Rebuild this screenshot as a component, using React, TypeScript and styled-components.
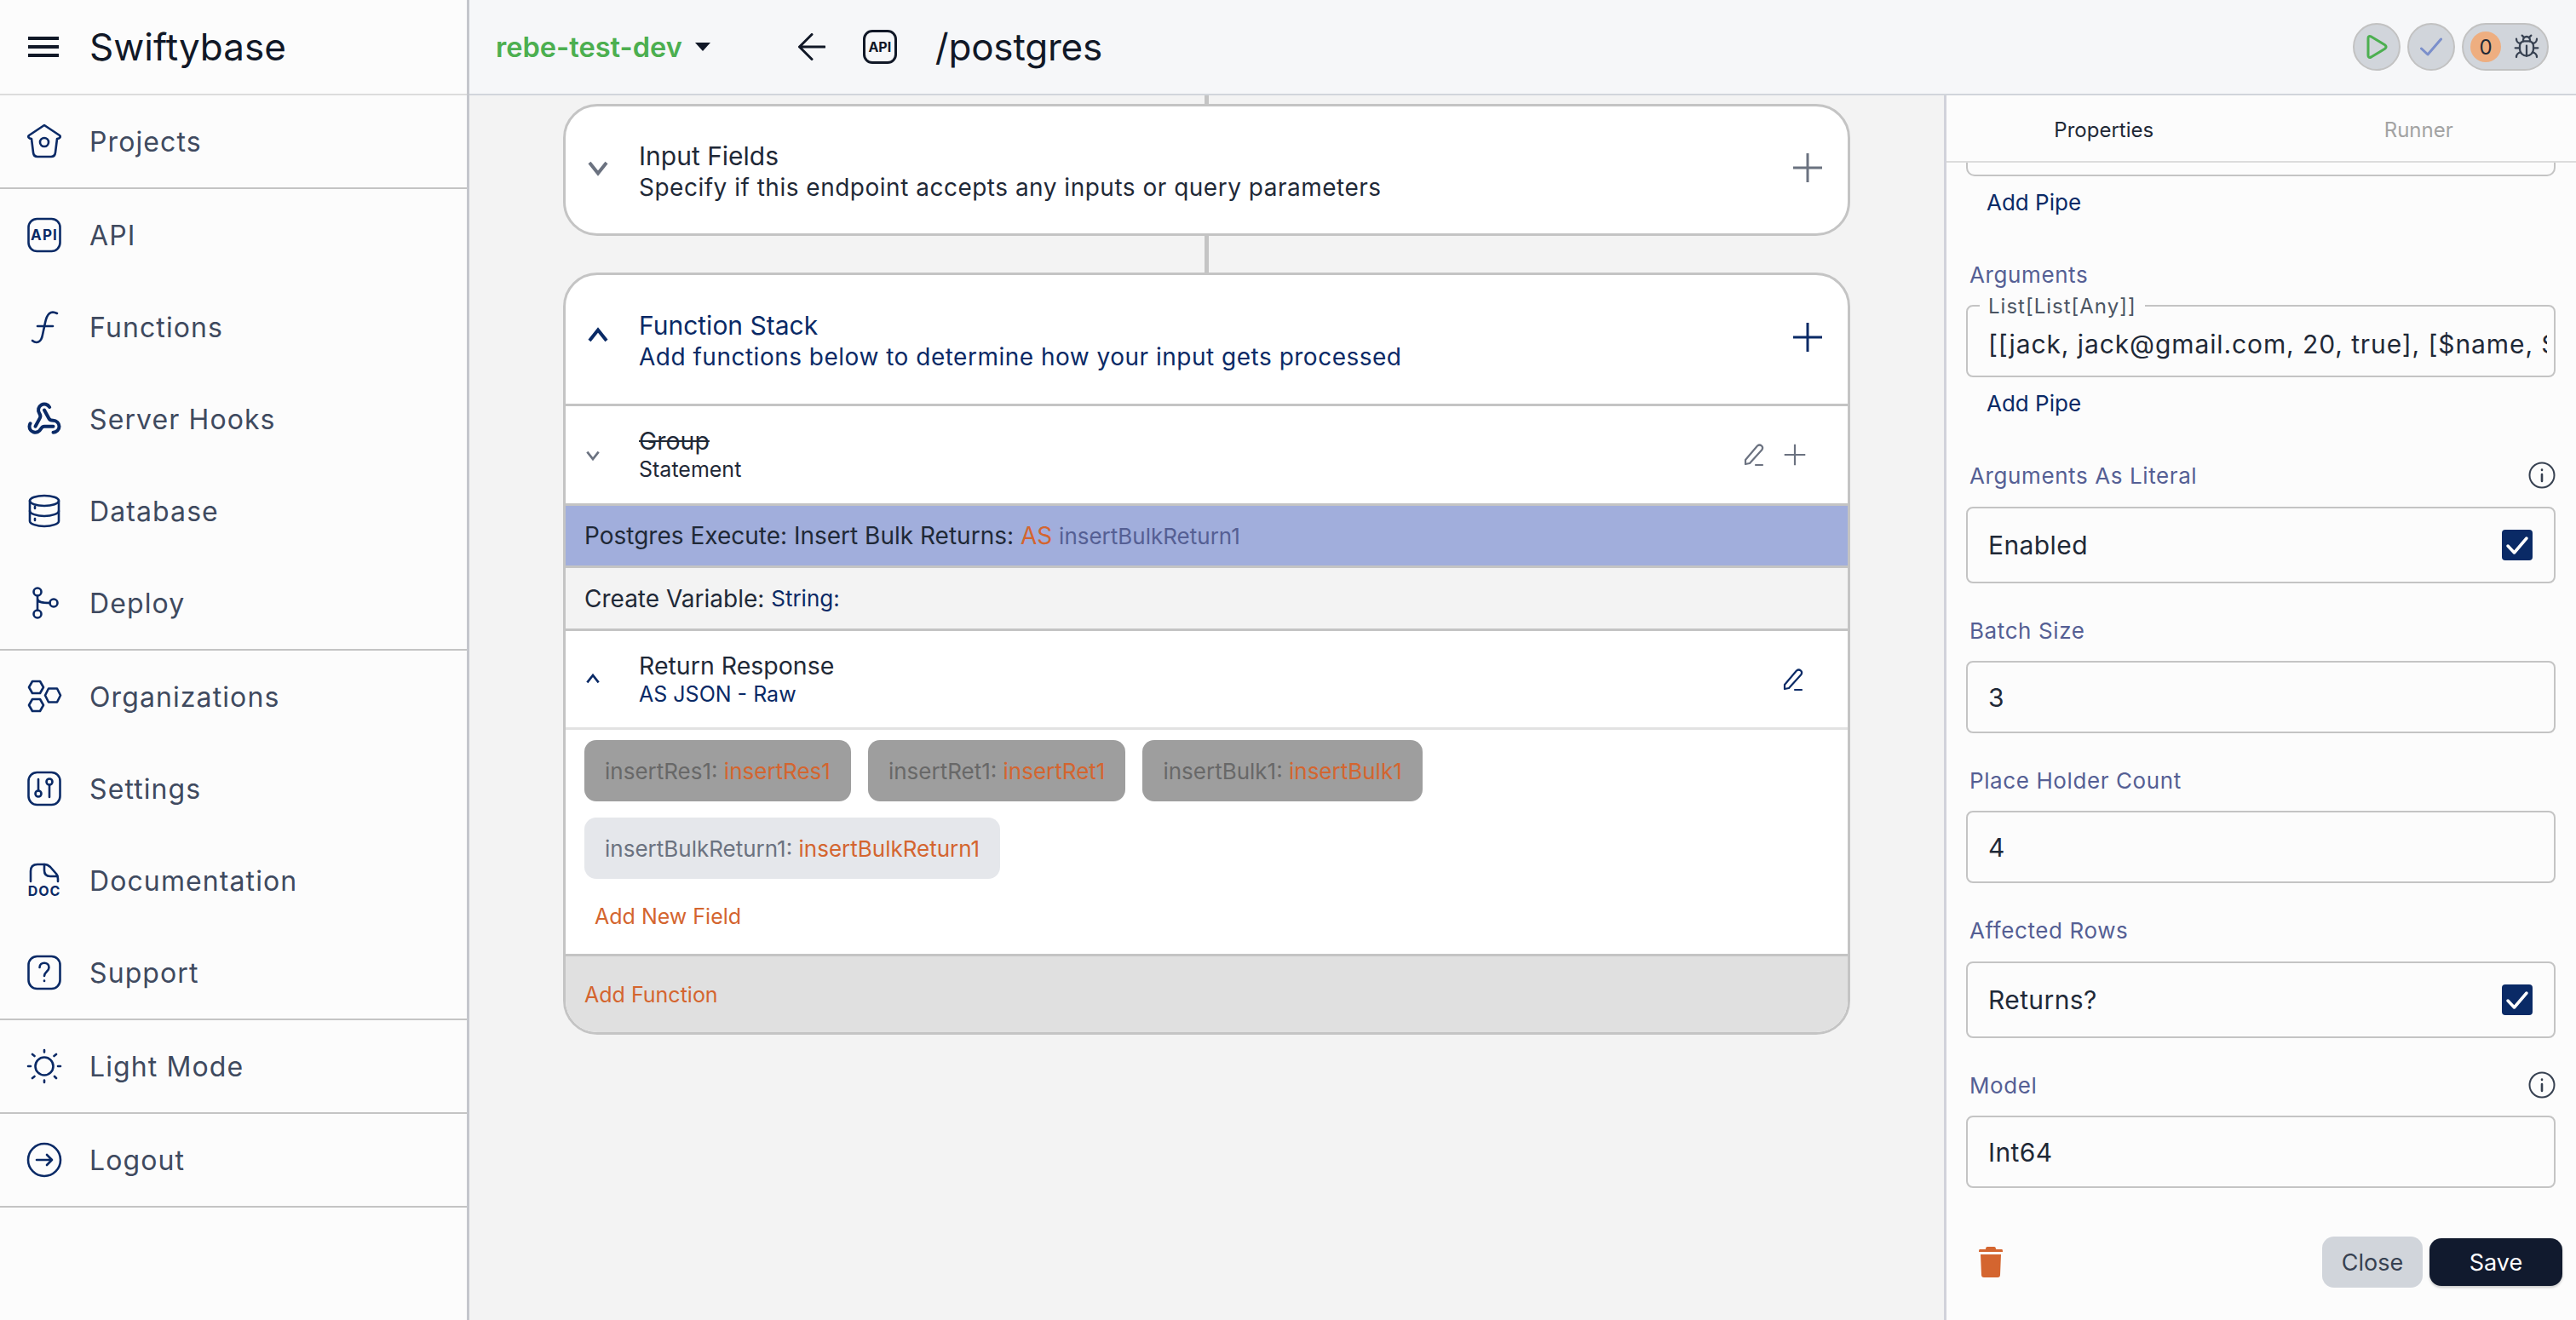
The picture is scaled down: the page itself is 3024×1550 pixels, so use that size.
import React from 'react';
import styled, { createGlobalStyle } from 'styled-components';
import { Bug, Webhook } from 'lucide-react';

const NAVY = '#0a2a66';
const ORANGE = '#d4652f';
const LINE = '#c4c4c4';

const GlobalStyle = createGlobalStyle`
  html, body {
    margin: 0;
    width: 3024px;
    height: 1550px;
    overflow: hidden;
    background: #f3f3f3;
    font-family: Inter, "Noto Sans", sans-serif;
    color: #111827;
  }
  * { box-sizing: border-box; }
`;

const Page = styled.div`
  display: flex;
  width: 3024px;
  height: 1550px;
`;

/* Sidebar */
const Sidebar = styled.aside`
  width: 551px;
  flex: none;
  height: 100%;
  background: #fcfcfc;
  border-right: 3px solid #c4c6cc;
`;

const Brand = styled.div`
  display: flex;
  align-items: center;
  height: 112px;
  padding-left: 33px;
  border-bottom: 2px solid #dcdcdc;
`;

const Burger = styled.div`
  display: flex;
  flex-direction: column;
  gap: 6px;
  width: 36px;
  margin-right: 36px;
  span {
    height: 4px;
    background: #111827;
  }
`;

const BrandName = styled.div`
  font-size: 44px;
  color: #111827;
`;

const NavGroup = styled.div`
  border-bottom: 2px solid ${LINE};
`;

const NavRow = styled.div`
  display: flex;
  align-items: center;
  height: 108px;
  padding-left: 31px;
  gap: 32px;
  font-size: 32px;
  letter-spacing: 1.1px;
  color: #3f4a5f;
`;

const NavIcon = styled.svg.attrs({ viewBox: '0 0 42 42', fill: 'none' })`
  width: 42px;
  height: 42px;
  flex: none;
  overflow: visible;
  stroke: ${NAVY};
  stroke-width: 2.6;
  stroke-linecap: round;
  stroke-linejoin: round;
  text {
    fill: ${NAVY};
    stroke: none;
    font-family: Inter, sans-serif;
    font-weight: 700;
  }
`;

const HomeIcon = () => (
  <NavIcon>
    <path d="M21 2 L39 14 Q41 16 38 17.500 L36 18 L34 34 Q33.500 39 29 39 H13 Q8.500 39 8 34 L6 18 L4 17.500 Q1 16 3 14 Z" />
    <circle cx="21" cy="22" r="5" />
  </NavIcon>
);

const ApiGlyph = () => (
  <NavIcon>
    <rect x="2.500" y="2" width="37" height="38" rx="10" />
    <text x="21" y="27" fontSize="17" textAnchor="middle">API</text>
  </NavIcon>
);

const FunctionIcon = () => (
  <NavIcon>
    <path d="M36 5 C28 1 24 6 22 16 L19 30 C17.500 39 12 41 7 37" />
    <path d="M13 20 H31" />
  </NavIcon>
);

const DatabaseIcon = () => (
  <NavIcon>
    <ellipse cx="21" cy="9" rx="17" ry="6" />
    <path d="M4 9 V33 C4 36 12 39 21 39 C30 39 38 36 38 33 V9" />
    <path d="M4 21 C4 24 12 27 21 27 C30 27 38 24 38 21" />
    <path d="M10 16 V18 M10 30 V32" />
  </NavIcon>
);

const DeployIcon = () => (
  <NavIcon>
    <circle cx="13" cy="8" r="4.500" />
    <circle cx="13" cy="34" r="4.500" />
    <circle cx="32" cy="21" r="4.500" />
    <path d="M13 12.500 V29.500 M13 16 C13 20 18 21 27.500 21" />
  </NavIcon>
);

const OrgIcon = () => (
  <NavIcon>
    <path d="M7 3 H16 L20 10 L16 17 H7 L3 10 Z" />
    <path d="M7 24 H16 L20 31 L16 38 H7 L3 31 Z" />
    <path d="M26 11.500 H36 L40 19.500 L36 27.500 H26 L22 19.500 Z" />
  </NavIcon>
);

const SettingsIcon = () => (
  <NavIcon>
    <rect x="2.500" y="2" width="37" height="38" rx="10" />
    <path d="M14 10 V23 M27 17 V31" />
    <circle cx="14" cy="27" r="3.500" />
    <circle cx="27" cy="13" r="3.500" />
  </NavIcon>
);

const DocIcon = () => (
  <NavIcon>
    <path d="M5 22 V10 Q5 2 13 2 H21 C24 2 26 3 28 5 L35 13 Q37 15 37 19 V22" />
    <path d="M21 2 V9 Q21 16 28 16 H36" />
    <text x="21" y="39" fontSize="16" textAnchor="middle" letterSpacing="1">DOC</text>
  </NavIcon>
);

const HelpIcon = () => (
  <NavIcon>
    <rect x="2.500" y="2" width="37" height="38" rx="10" />
    <path d="M15.500 15 C15.500 8 26.500 8 26.500 15 C26.500 20 21 20 21 25" />
    <path d="M21 30.500 V31" />
  </NavIcon>
);

const SunIcon = () => (
  <NavIcon>
    <circle cx="21" cy="21" r="10.500" />
    <path d="M21 2 V4.500 M21 37.500 V40 M2 21 H5 M37 21 H40 M7 7 L9.500 9 M33 33 L35 35 M35 7 L32.500 9 M7 35 L9.500 33" />
  </NavIcon>
);

const LogoutIcon = () => (
  <NavIcon>
    <circle cx="21" cy="21" r="19" />
    <path d="M12 21 H30 M24 15 L30 21 L24 27" />
  </NavIcon>
);

const navGroups: { label: string; icon: React.ReactNode }[][] = [
  [{ label: 'Projects', icon: <HomeIcon /> }],
  [
    { label: 'API', icon: <ApiGlyph /> },
    { label: 'Functions', icon: <FunctionIcon /> },
    { label: 'Server Hooks', icon: <Webhook size={42} color={NAVY} strokeWidth={2.3} /> },
    { label: 'Database', icon: <DatabaseIcon /> },
    { label: 'Deploy', icon: <DeployIcon /> },
  ],
  [
    { label: 'Organizations', icon: <OrgIcon /> },
    { label: 'Settings', icon: <SettingsIcon /> },
    { label: 'Documentation', icon: <DocIcon /> },
    { label: 'Support', icon: <HelpIcon /> },
  ],
  [{ label: 'Light Mode', icon: <SunIcon /> }],
  [{ label: 'Logout', icon: <LogoutIcon /> }],
];

/* Top bar */
const Content = styled.div`
  flex: 1;
  min-width: 0;
  display: flex;
  flex-direction: column;
`;

const TopBar = styled.header`
  display: flex;
  align-items: center;
  height: 112px;
  flex: none;
  padding: 0 32px 0 31px;
  background: #f6f7f9;
  border-bottom: 2px solid #d1d5db;
`;

const ProjectName = styled.div`
  font-size: 32.600px;
  font-weight: 600;
  color: #4caf50;
`;

const Caret = styled.div`
  width: 0;
  height: 0;
  margin-left: 15px;
  border-left: 9px solid transparent;
  border-right: 9px solid transparent;
  border-top: 10px solid #111827;
`;

const BackIcon = styled.svg.attrs({ viewBox: '0 0 32 32', fill: 'none' })`
  width: 32px;
  height: 32px;
  margin-left: 103px;
  stroke: #111827;
  stroke-width: 3;
  stroke-linecap: round;
  stroke-linejoin: round;
`;

const ApiBadge = styled.div`
  display: flex;
  align-items: center;
  justify-content: center;
  width: 40px;
  height: 40px;
  margin-left: 44px;
  border: 3px solid #111827;
  border-radius: 11px;
  font-size: 16px;
  font-weight: 700;
  color: #111827;
`;

const PathTitle = styled.div`
  margin-left: 45px;
  font-size: 44px;
  letter-spacing: -0.2px;
  color: #111827;
`;

const TopActions = styled.div`
  display: flex;
  gap: 8px;
  margin-left: auto;
`;

const ActionPill = styled.div`
  display: flex;
  align-items: center;
  justify-content: center;
  gap: 14px;
  height: 56px;
  min-width: 56px;
  padding: ${({ $wide }: { $wide?: boolean }) => ($wide ? '0 8px' : '0')};
  border: 2px solid #c2c2c2;
  border-radius: 28px;
  background: #d1d5db;
`;

const CountDot = styled.div`
  display: flex;
  align-items: center;
  justify-content: center;
  width: 36px;
  height: 36px;
  border-radius: 50%;
  background: #eeae80;
  font-size: 24px;
  color: #1f2937;
`;

/* Center canvas */
const Body = styled.div`
  flex: 1;
  min-height: 0;
  display: flex;
`;

const Canvas = styled.main`
  flex: 1;
  display: flex;
  flex-direction: column;
  align-items: center;
  background: #f3f3f3;
`;

const Connector = styled.div<{ $h: number }>`
  width: 5px;
  height: ${({ $h }) => $h}px;
  flex: none;
  background: ${LINE};
`;

const Card = styled.section`
  width: 1511px;
  background: #fff;
  border: 3px solid ${LINE};
  border-radius: 40px;
  overflow: hidden;
`;

const CardHead = styled.div<{ $h: number }>`
  display: flex;
  align-items: center;
  height: ${({ $h }) => $h}px;
  padding: 0 29px 0 27px;
`;

const Chevron = styled.svg.attrs({ viewBox: '0 0 24 24', fill: 'none' })<{ $size: number; $color: string; $up?: boolean }>`
  width: ${({ $size }) => $size}px;
  height: ${({ $size }) => $size}px;
  flex: none;
  stroke: ${({ $color }) => $color};
  stroke-width: 3.200;
  transform: ${({ $up }) => ($up ? 'rotate(180deg)' : 'none')};
`;

const ChevronSlot = styled.div`
  width: 62px;
  flex: none;
  display: flex;
  align-items: center;
  margin: 0 0 7px -4px;
  padding-right: 1px;
`;

const PlusSlot = styled.div`
  display: flex;
  margin-bottom: 6px;
`;

const CardText = styled.div`
  flex: 1;
  min-width: 0;
  padding: 4px 0 0 1px;
`;

const HeadTitle = styled.div<{ $navy?: boolean }>`
  font-size: 30px;
  line-height: 37px;
  color: ${({ $navy }) => ($navy ? NAVY : '#1f2937')};
`;

const HeadSub = styled.div<{ $navy?: boolean }>`
  font-size: 28px;
  line-height: 36px;
  letter-spacing: 0.5px;
  color: ${({ $navy }) => ($navy ? NAVY : '#1f2937')};
`;

const CrossIcon = styled.svg.attrs({ viewBox: '0 0 36 36', fill: 'none' })<{ $size: number; $color: string }>`
  width: ${({ $size }) => $size}px;
  height: ${({ $size }) => $size}px;
  flex: none;
  stroke: ${({ $color }) => $color};
  stroke-width: 3;
`;

const Cross = ({ size = 36, color = '#6b7280' }: { size?: number; color?: string }) => (
  <CrossIcon $size={size} $color={color}>
    <path d="M18 1 V35 M1 18 H35" />
  </CrossIcon>
);

const PencilIcon = styled.svg.attrs({ viewBox: '0 0 28 28', fill: 'none' })<{ $color: string }>`
  width: 28px;
  height: 28px;
  flex: none;
  stroke: ${({ $color }) => $color};
  stroke-width: 2.200;
  stroke-linejoin: round;
  stroke-linecap: round;
`;

const Pencil = ({ color }: { color: string }) => (
  <PencilIcon $color={color}>
    <path d="M3 20 L17 3.500 Q19.500 1.500 22 3.500 Q24 5.500 22.500 8 L8 24 L3 25 Z" />
    <path d="M15 26 H23" />
  </PencilIcon>
);

const StackRow = styled.div<{ $h: number; $bg?: string }>`
  display: flex;
  align-items: center;
  height: ${({ $h }) => $h}px;
  padding: 0 22px;
  font-size: 28px;
  color: #1f2937;
  background: ${({ $bg }) => $bg || '#fff'};
  border-top: 3px solid ${LINE};
`;

const StepHead = styled.div<{ $h: number }>`
  display: flex;
  align-items: center;
  height: ${({ $h }) => $h}px;
  padding: 0 22px;
  border-top: 3px solid ${LINE};
  background: #fff;
`;

const StepChevron = styled.div`
  width: 64px;
  flex: none;
  display: flex;
`;

const StepText = styled.div`
  flex: 1;
  min-width: 0;
`;

const StepTitle = styled.div<{ $struck?: boolean }>`
  font-size: 28.500px;
  line-height: 34px;
  color: #1f2937;
  text-decoration: ${({ $struck }) => ($struck ? 'line-through' : 'none')};
`;

const StepSub = styled.div<{ $navy?: boolean }>`
  font-size: 25px;
  line-height: 32px;
  color: ${({ $navy }) => ($navy ? NAVY : '#1f2937')};
`;

const StepActions = styled.div`
  display: flex;
  align-items: center;
  gap: 20px;
  margin-right: 27px;
`;

const Orange = styled.span`
  color: ${ORANGE};
`;

const Muted = styled.span`
  font-size: 26px;
  color: #555f94;
`;

const Navy = styled.span`
  font-size: 26px;
  color: ${NAVY};
`;

const FieldArea = styled.div`
  display: flex;
  flex-direction: column;
  gap: 19px;
  padding: 12px 22px 0;
  border-top: 3px solid #e2e2e2;
`;

const ChipRow = styled.div`
  display: flex;
  gap: 20px;
`;

const Chip = styled.div<{ $active?: boolean }>`
  display: flex;
  align-items: center;
  height: 72px;
  padding: 0 24px;
  border-radius: 14px;
  font-size: 26px;
  color: ${({ $active }) => ($active ? '#6b7280' : '#686868')};
  background: ${({ $active }) => ($active ? '#e5e7eb' : '#9e9e9e')};
`;

const AddField = styled.div`
  display: flex;
  align-items: center;
  height: 88px;
  padding: 0 34px;
  font-size: 25px;
  color: ${ORANGE};
`;

const AddFunction = styled.div`
  display: flex;
  align-items: center;
  height: 92px;
  padding: 0 22px;
  font-size: 25px;
  color: ${ORANGE};
  background: #e0e0e0;
  border-top: 3px solid ${LINE};
`;

/* Right panel */
const Panel = styled.aside`
  width: 742px;
  flex: none;
  display: flex;
  flex-direction: column;
  background: #fcfcfc;
  border-left: 3px solid #d1d2da;
`;

const Tabs = styled.div`
  display: grid;
  grid-template-columns: 1fr 1fr;
  height: 79px;
  flex: none;
  padding-top: 4px;
  border-bottom: 2px solid #dcdcdc;
`;

const Tab = styled.div<{ $off?: boolean }>`
  display: flex;
  align-items: center;
  justify-content: center;
  font-size: 24px;
  color: ${({ $off }) => ($off ? '#a3a3a3' : '#1f2937')};
`;

const Form = styled.div`
  flex: 1;
  min-height: 0;
  display: flex;
  flex-direction: column;
  padding: 0 24px 0 23px;
`;

const ClippedBox = styled.div`
  height: 16px;
  flex: none;
  border: 2px solid ${LINE};
  border-top: none;
  border-radius: 0 0 10px 10px;
`;

const AddPipe = styled.div`
  flex: none;
  height: 32px;
  margin: ${({ $top }: { $top: number }) => $top}px 0 0 24px;
  font-size: 26px;
  line-height: 32px;
  color: ${NAVY};
`;

const LabelRow = styled.div<{ $top: number }>`
  display: flex;
  align-items: center;
  justify-content: space-between;
  flex: none;
  height: 32px;
  margin-top: ${({ $top }) => $top}px;
  padding: 0 0 0 4px;
  font-size: 26px;
  letter-spacing: 0.6px;
  color: #555f94;
`;

const InfoIcon = styled.svg.attrs({ viewBox: '0 0 32 32', fill: 'none' })`
  width: 32px;
  height: 32px;
  stroke: #374151;
  stroke-width: 2;
  stroke-linecap: round;
`;

const Info = () => (
  <InfoIcon>
    <circle cx="16" cy="16" r="14.500" />
    <path d="M16 15 V23 M16 9.500 V10" strokeWidth="2.600" />
  </InfoIcon>
);

const Field = styled.div<{ $h: number; $top: number }>`
  position: relative;
  display: flex;
  align-items: center;
  justify-content: space-between;
  flex: none;
  height: ${({ $h }) => $h}px;
  margin-top: ${({ $top }) => $top}px;
  padding: 0 25px 0 24px;
  border: 2px solid ${LINE};
  border-radius: 8px;
  font-size: 30px;
  letter-spacing: 0.4px;
  color: #1f2937;
`;

const Legend = styled.span`
  position: absolute;
  top: -15px;
  left: 14px;
  padding: 0 10px;
  background: #fcfcfc;
  font-size: 24px;
  line-height: 30px;
  letter-spacing: 1px;
  color: #4b5563;
`;

const ClipText = styled.div`
  flex: none;
  width: calc(100% + 17px);
  margin-top: 6px;
  overflow: hidden;
  white-space: nowrap;
  letter-spacing: 0.9px;
`;

const CheckBox = styled.div`
  display: flex;
  align-items: center;
  justify-content: center;
  width: 36px;
  height: 36px;
  border-radius: 4px;
  background: ${NAVY};
  svg {
    width: 28px;
    height: 28px;
    stroke: #fff;
    stroke-width: 3.500;
    fill: none;
    stroke-linecap: round;
    stroke-linejoin: round;
  }
`;

const Checked = () => (
  <CheckBox>
    <svg viewBox="0 0 28 28">
      <path d="M3 15 L10.500 23 L25 6" />
    </svg>
  </CheckBox>
);

const PanelFoot = styled.div`
  display: flex;
  align-items: center;
  margin: 57px -8px 0 15px;
`;

const TrashIcon = styled.svg.attrs({ viewBox: '0 0 28 36' })`
  width: 28px;
  height: 36px;
  fill: ${ORANGE};
`;

const FootButton = styled.div<{ $dark?: boolean }>`
  display: flex;
  align-items: center;
  justify-content: center;
  width: ${({ $dark }) => ($dark ? '156px' : '118px')};
  height: ${({ $dark }) => ($dark ? '56px' : '60px')};
  margin-left: ${({ $dark }) => ($dark ? '8px' : 'auto')};
  border-radius: 14px;
  font-size: 27px;
  color: ${({ $dark }) => ($dark ? '#fff' : '#374151')};
  background: ${({ $dark }) => ($dark ? '#111a2e' : '#d1d5db')};
  box-shadow: ${({ $dark }) => ($dark ? '0 2px 3px rgba(0,0,0,.2)' : 'none')};
`;

export default function App() {
  return (
    <>
      <GlobalStyle />
      <Page>
        <Sidebar>
          <Brand>
            <Burger><span /><span /><span /></Burger>
            <BrandName>Swiftybase</BrandName>
          </Brand>
          {navGroups.map((group, i) => (
            <NavGroup key={i}>
              {group.map((item) => (
                <NavRow key={item.label}>
                  {item.icon}
                  {item.label}
                </NavRow>
              ))}
            </NavGroup>
          ))}
        </Sidebar>
        <Content>
          <TopBar>
            <ProjectName>rebe-test-dev</ProjectName>
            <Caret />
            <BackIcon>
              <path d="M31 16 H1.500 M16 1.500 L1.500 16 L16 30.500" />
            </BackIcon>
            <ApiBadge>API</ApiBadge>
            <PathTitle>/postgres</PathTitle>
            <TopActions>
              <ActionPill>
                <svg width="26" height="30" viewBox="0 0 26 30" fill="none" stroke="#4caf50" strokeWidth="3" strokeLinejoin="round">
                  <path d="M3 5 Q3 1.500 6.500 3 L23 13 Q25 15 23 17 L6.500 27 Q3 28.500 3 25 Z" />
                </svg>
              </ActionPill>
              <ActionPill>
                <svg width="26" height="22" viewBox="0 0 26 22" fill="none" stroke="#7b8fcb" strokeWidth="3" strokeLinecap="round" strokeLinejoin="round">
                  <path d="M1.500 13 L9 20 L24.500 2" />
                </svg>
              </ActionPill>
              <ActionPill $wide>
                <CountDot>0</CountDot>
                <Bug size={32} color="#374151" strokeWidth={1.7} />
              </ActionPill>
            </TopActions>
          </TopBar>
          <Body>
            <Canvas>
              <Connector $h={10} />
              <Card>
                <CardHead $h={149}>
                  <ChevronSlot>
                    <Chevron $size={30} $color="#6b7280"><path d="M4 8 L12 18 L20 8" /></Chevron>
                  </ChevronSlot>
                  <CardText>
                    <HeadTitle>Input Fields</HeadTitle>
                    <HeadSub>Specify if this endpoint accepts any inputs or query parameters</HeadSub>
                  </CardText>
                  <PlusSlot><Cross /></PlusSlot>
                </CardHead>
              </Card>
              <Connector $h={43} />
              <Card>
                <CardHead $h={151}>
                  <ChevronSlot>
                    <Chevron $size={30} $color={NAVY} $up><path d="M4 8 L12 18 L20 8" /></Chevron>
                  </ChevronSlot>
                  <CardText>
                    <HeadTitle $navy>Function Stack</HeadTitle>
                    <HeadSub $navy>Add functions below to determine how your input gets processed</HeadSub>
                  </CardText>
                  <PlusSlot><Cross color={NAVY} /></PlusSlot>
                </CardHead>
                <StepHead $h={117}>
                  <StepChevron>
                    <Chevron $size={20} $color="#6b7280"><path d="M4 8 L12 18 L20 8" /></Chevron>
                  </StepChevron>
                  <StepText>
                    <StepTitle $struck>Group</StepTitle>
                    <StepSub>Statement</StepSub>
                  </StepText>
                  <StepActions>
                    <Pencil color="#6b7280" />
                    <Cross size={26} />
                  </StepActions>
                </StepHead>
                <StackRow $h={73} $bg="#a1aedc">
                  Postgres Execute: Insert Bulk Returns:&nbsp;<Orange>AS</Orange>&nbsp;<Muted>insertBulkReturn1</Muted>
                </StackRow>
                <StackRow $h={74} $bg="#f3f3f3">
                  Create Variable:&nbsp;<Navy>String:</Navy>
                </StackRow>
                <StepHead $h={116}>
                  <StepChevron>
                    <Chevron $size={20} $color={NAVY} $up><path d="M4 8 L12 18 L20 8" /></Chevron>
                  </StepChevron>
                  <StepText>
                    <StepTitle>Return Response</StepTitle>
                    <StepSub $navy>AS JSON - Raw</StepSub>
                  </StepText>
                  <StepActions>
                    <Pencil color={NAVY} />
                  </StepActions>
                </StepHead>
                <FieldArea>
                  <ChipRow>
                    <Chip>insertRes1:&nbsp;<Orange>insertRes1</Orange></Chip>
                    <Chip>insertRet1:&nbsp;<Orange>insertRet1</Orange></Chip>
                    <Chip>insertBulk1:&nbsp;<Orange>insertBulk1</Orange></Chip>
                  </ChipRow>
                  <ChipRow>
                    <Chip $active>insertBulkReturn1:&nbsp;<Orange>insertBulkReturn1</Orange></Chip>
                  </ChipRow>
                </FieldArea>
                <AddField>Add New Field</AddField>
                <AddFunction>Add Function</AddFunction>
              </Card>
            </Canvas>
            <Panel>
              <Tabs>
                <Tab>Properties</Tab>
                <Tab $off>Runner</Tab>
              </Tabs>
              <Form>
                <ClippedBox />
                <AddPipe $top={15}>Add Pipe</AddPipe>
                <LabelRow $top={52}>Arguments</LabelRow>
                <Field $h={85} $top={20}>
                  <Legend>List[List[Any]]</Legend>
                  <ClipText>[[jack, jack@gmail.com, 20, true], [$name, $email, $age, $active]]</ClipText>
                </Field>
                <AddPipe $top={15}>Add Pipe</AddPipe>
                <LabelRow $top={52}>Arguments As Literal<Info /></LabelRow>
                <Field $h={90} $top={21}>Enabled<Checked /></Field>
                <LabelRow $top={39}>Batch Size</LabelRow>
                <Field $h={85} $top={20}>3</Field>
                <LabelRow $top={39}>Place Holder Count</LabelRow>
                <Field $h={85} $top={20}>4</Field>
                <LabelRow $top={39}>Affected Rows</LabelRow>
                <Field $h={90} $top={21}>Returns?<Checked /></Field>
                <LabelRow $top={39}>Model<Info /></LabelRow>
                <Field $h={85} $top={20}>Int64</Field>
                <PanelFoot>
                  <TrashIcon>
                    <path d="M10 0 H18 Q20 0 20 3 H27 Q28 3 28 5 V6 H0 V5 Q0 3 1 3 H8 Q8 0 10 0 Z" />
                    <path d="M2 9 H26 L25 33 Q25 36 22 36 H6 Q3 36 3 33 Z" />
                  </TrashIcon>
                  <FootButton>Close</FootButton>
                  <FootButton $dark>Save</FootButton>
                </PanelFoot>
              </Form>
            </Panel>
          </Body>
        </Content>
      </Page>
    </>
  );
}
